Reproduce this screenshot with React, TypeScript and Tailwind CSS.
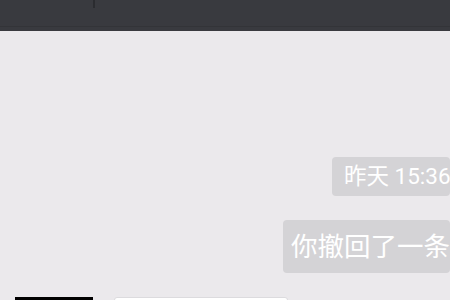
export default function App() {
  return (
    <div
      className="w-[450px] h-[300px] overflow-hidden bg-[#ebe9ec] flex flex-col"
      style={{ fontFamily: "Roboto, 'Noto Sans CJK SC', sans-serif" }}
    >
      <header className="h-[31px] shrink-0 bg-[#393a3f] flex flex-col">
        <div className="ml-[93px] w-[2px] h-[8px] bg-[#2b2c30]" />
        <div className="mt-auto mb-[4px] h-px bg-[#333438]" />
      </header>

      <main className="flex flex-col flex-1">
        <div className="mt-[126px] ml-[332px] h-[39px] rounded-[4px] bg-[#d4d3d6] pl-[12px] flex items-center whitespace-nowrap text-white text-[22.5px]">
          昨天 15:36
        </div>

        <div className="mt-[24px] ml-[283px] h-[53px] rounded-[4px] bg-[#d4d3d6] pl-[8px] flex items-center whitespace-nowrap text-white text-[26.5px]">
          你撤回了一条消息
        </div>

        <div className="mt-[24px] flex items-start gap-[21px] pl-[15px]">
          <div className="w-[78px] h-[10px] bg-black" />
          <div className="w-[174px] h-[10px] bg-white border border-[#dcdbde] rounded-t-[3px]" />
        </div>
      </main>
    </div>
  );
}
